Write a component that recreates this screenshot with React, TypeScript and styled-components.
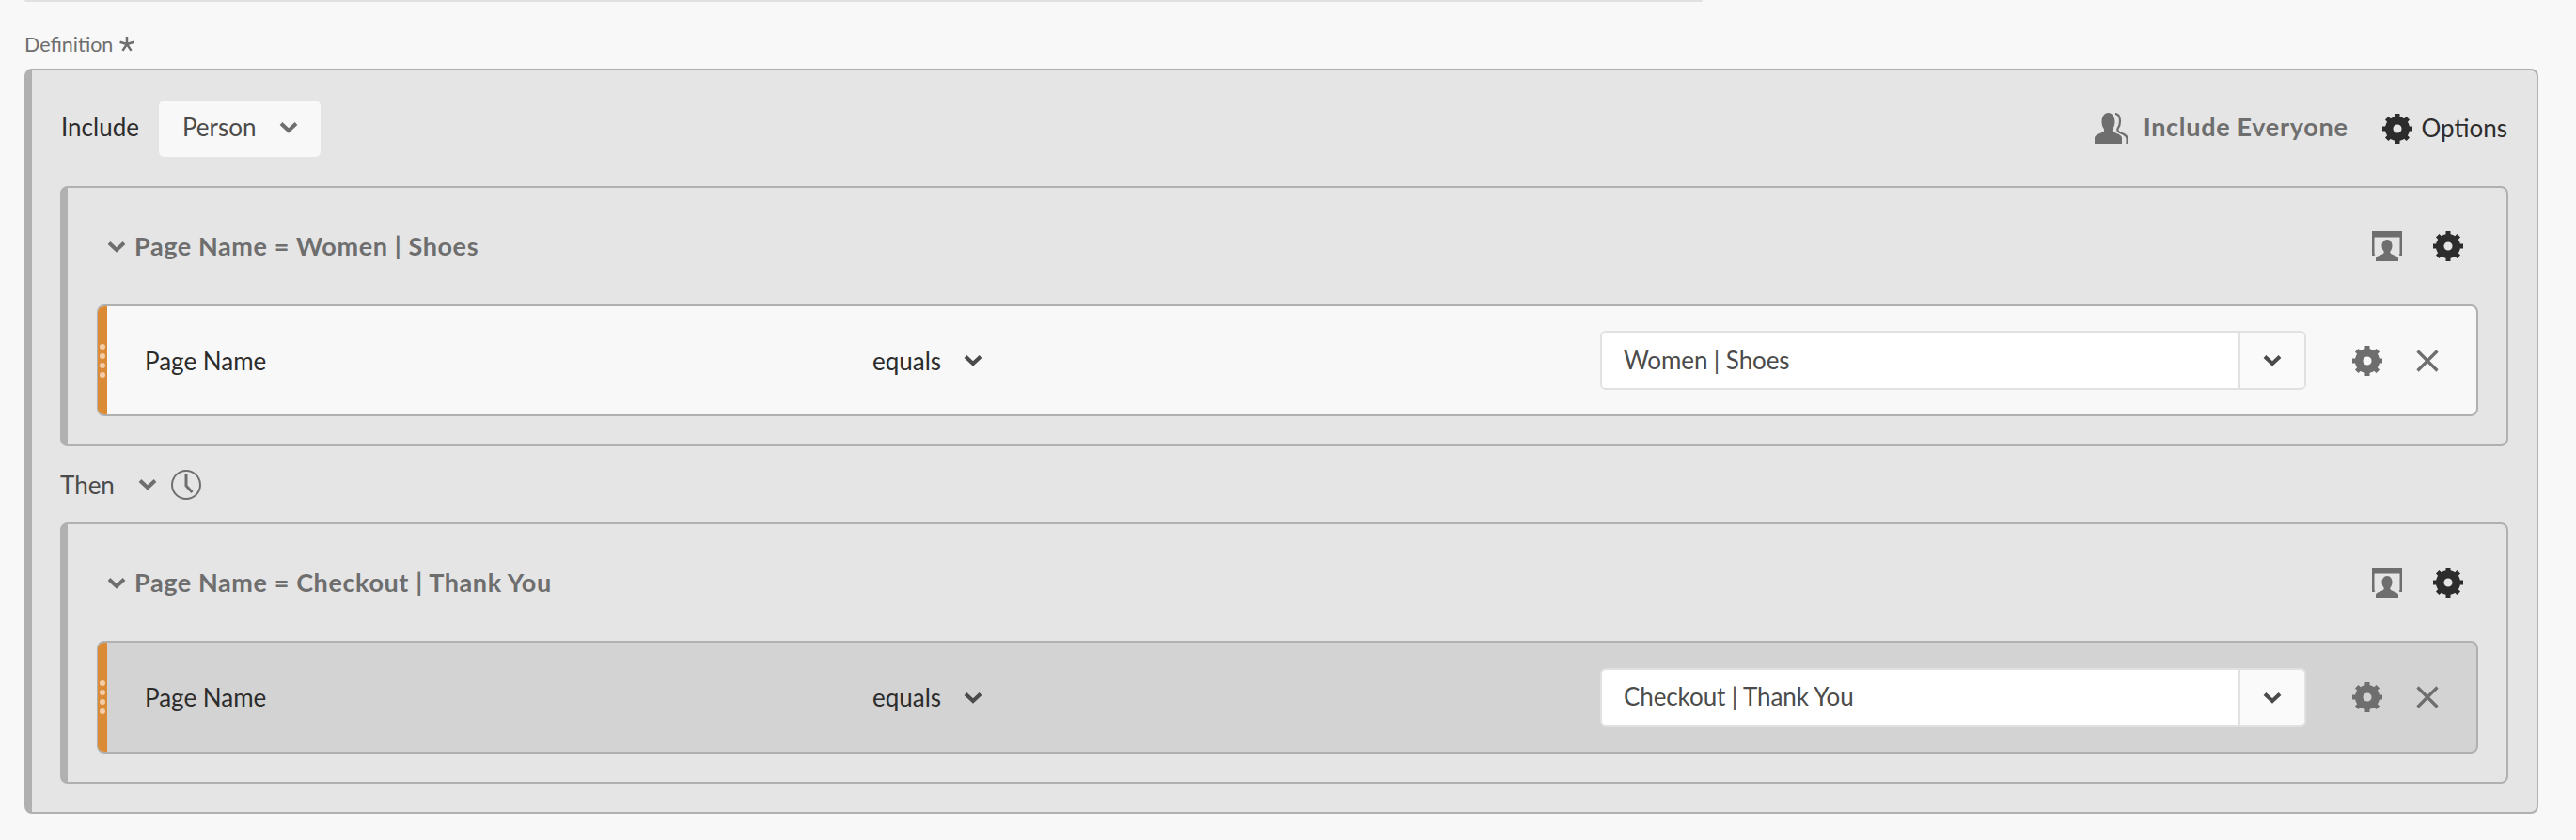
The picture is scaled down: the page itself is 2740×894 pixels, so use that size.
import React from 'react';
import styled, { createGlobalStyle } from 'styled-components';

const GlobalStyle = createGlobalStyle`
  html, body {
    margin: 0;
    padding: 0;
    background: #f8f8f8;
    font-family: Lato, 'Open Sans', sans-serif;
    overflow: hidden;
  }
`;

const Chevron = ({ color = '#6e6e6e' }: { color?: string }) => (
  <svg width="20" height="13" viewBox="0 0 20 13">
    <polyline points="2,2.500 10,10 18,2.500" fill="none" stroke={color} strokeWidth="4" />
  </svg>
);

const Gear = ({ color = '#2c2c2c' }: { color?: string }) => (
  <svg width="32" height="32" viewBox="0 0 32 32">
    {[0, 45, 90, 135, 180, 225, 270, 315].map((deg) => (
      <rect key={deg} x="13.500" y="0" width="5" height="7" fill={color} transform={`rotate(${deg} 16 16)`} />
    ))}
    <circle cx="16" cy="16" r="8.800" fill="none" stroke={color} strokeWidth="8.500" />
  </svg>
);

const Close = () => (
  <svg width="24" height="24" viewBox="0 0 24 24">
    <path d="M1.500 1.500 22.500 22.500M22.500 1.500 1.500 22.500" fill="none" stroke="#6e6e6e" strokeWidth="3.200" />
  </svg>
);

const People = () => (
  <svg width="36" height="33" viewBox="0 0 36 33">
    <path
      d="M0 33v-6c0-3 4-4.500 8-6 2-.8 2.500-2 2-3.500-1.500-2-2.500-5-2.500-8C7.500 4 10.500 0 14.500 0s7 4 7 9.500c0 3-1 6-2.500 8-.5 1.500 0 2.700 2 3.500 4 1.500 8 3 8 6v6z"
      fill="#6e6e6e"
    />
    <path
      d="M22 1c3.500.5 5 4 5 8 0 3-1 6-2.500 8-.5 1.500 0 3 2 4 4 1.500 8 3 8 6.500V33"
      fill="none"
      stroke="#6e6e6e"
      strokeWidth="2.200"
    />
  </svg>
);

const SegmentIcon = () => (
  <svg width="32" height="32" viewBox="0 0 32 32">
    <path d="M0 0h32v26h-2.500l-1-1.500h1V6.500h-27v18h1l-1 1.500H0z" fill="#6e6e6e" />
    <path
      d="M4 32v-3c0-2 4-3 7-4.500 1.500-.8 2-1.500 1.500-3-1-1.500-2-3.500-2-6C10.500 12 12.800 9 16 9s5.500 3 5.500 6.500c0 2.500-1 4.500-2 6-.5 1.500 0 2.200 1.500 3 3 1.500 7 2.500 7 4.500v3z"
      fill="#6e6e6e"
    />
  </svg>
);

const Clock = () => (
  <svg width="32" height="32" viewBox="0 0 32 32">
    <circle cx="16" cy="16" r="15" fill="none" stroke="#6e6e6e" strokeWidth="2" />
    <polyline points="16,5 16,17 22.500,24" fill="none" stroke="#6e6e6e" strokeWidth="3" />
  </svg>
);

const Asterisk = () => (
  <svg width="16" height="16" viewBox="0 0 14 14">
    <path d="M7 0v7M7 7 .5 5M7 7l6.500-2M7 7l-4 6M7 7l4 6" fill="none" stroke="#6e6e6e" strokeWidth="2.200" />
  </svg>
);

const Page = styled.div`
  width: 2740px;
  height: 894px;
  box-sizing: border-box;
  padding-right: 40px;
  padding-left: 26px;
`;

const ClippedField = styled.div`
  width: 1785px;
  height: 2px;
  box-sizing: border-box;
  border-bottom: 2px solid #e1e1e1;
  border-radius: 0 0 6px 6px;
`;

const FieldLabel = styled.div`
  display: flex;
  align-items: center;
  gap: 7px;
  box-sizing: border-box;
  height: 71px;
  padding-top: 18px;
  font-size: 21.500px;
  color: #6e6e6e;
`;

const OuterGroup = styled.div`
  box-sizing: border-box;
  height: 793px;
  background: #e5e5e5;
  border: 2px solid #b0b0b0;
  border-left-width: 8px;
  border-radius: 8px;
  padding: 0 30px;
`;

const TopBar = styled.div`
  display: flex;
  align-items: center;
  height: 123px;
  padding-left: 1px;
  padding-right: 1px;
`;

const PlainLabel = styled.span`
  padding-bottom: 3px;
  font-size: 26px;
  color: #2c2c2c;
`;

const ScopeSelect = styled.div`
  display: flex;
  align-items: center;
  justify-content: space-between;
  box-sizing: border-box;
  width: 172px;
  height: 60px;
  margin-left: 21px;
  padding: 0 24px 3px 25px;
  background: #f8f8f8;
  border-radius: 6px;
  font-size: 26px;
  color: #4b4b4b;
`;

const Actions = styled.div`
  display: flex;
  align-items: center;
  margin-left: auto;
`;

const EveryoneButton = styled.div`
  display: flex;
  align-items: center;
  gap: 16px;
  margin-right: 36px;
  font-size: 27px;
  font-weight: 700;
  letter-spacing: 0.7px;
  color: #6e6e6e;
`;

const EveryoneLabel = styled.span`
  padding-bottom: 4px;
`;

const OptionsButton = styled.div`
  display: flex;
  align-items: center;
  gap: 10px;
  font-size: 26px;
  color: #2c2c2c;
`;

const OptionsLabel = styled.span`
  padding-bottom: 2px;
`;

const Container = styled.div`
  box-sizing: border-box;
  background: #e5e5e5;
  border: 2px solid #b0b0b0;
  border-left-width: 8px;
  border-radius: 8px;
  padding: 0 30px 30px 31px;
`;

const ContainerHead = styled.div`
  display: flex;
  align-items: center;
  height: 124px;
  padding: 0 16px 0 11px;
`;

const ContainerTitle = styled.span`
  margin-left: 9px;
  padding-bottom: 2px;
  font-size: 27px;
  font-weight: 700;
  letter-spacing: 0.6px;
  color: #6e6e6e;
`;

const HeadIcons = styled.div`
  display: flex;
  align-items: center;
  gap: 33px;
  margin-left: auto;
`;

const Rule = styled.div<{ $dim?: boolean }>`
  display: flex;
  align-items: center;
  box-sizing: border-box;
  height: ${(p) => (p.$dim ? '120px' : '119px')};
  overflow: hidden;
  background: ${(p) => (p.$dim ? '#d3d3d3' : '#f8f8f8')};
  border: 2px solid #b0b0b0;
  border-left-width: 1px;
  border-radius: 8px;
`;

const Handle = styled.div`
  display: flex;
  flex-direction: column;
  align-items: center;
  justify-content: center;
  gap: 4px;
  flex: none;
  width: 10px;
  align-self: stretch;
  background: #db8b35;
`;

const HandleDot = styled.i`
  display: block;
  width: 6px;
  height: 6px;
  border-radius: 50%;
  background: #f3cda8;
`;

const AttributeName = styled.span`
  flex: none;
  width: 774px;
  margin-left: 40px;
  font-size: 26px;
  color: #2c2c2c;
`;

const Operator = styled.div`
  display: flex;
  align-items: center;
  gap: 24px;
  flex: none;
  width: 774px;
  font-size: 26px;
  color: #2c2c2c;
`;

const Combo = styled.div`
  display: flex;
  box-sizing: border-box;
  flex: none;
  width: 751px;
  height: 63px;
  overflow: hidden;
  border: 2px solid #e1e1e1;
  border-radius: 6px;
`;

const ComboInput = styled.div`
  display: flex;
  align-items: center;
  flex: 1;
  padding: 0 0 2px 23px;
  background: #fff;
  font-size: 26px;
  letter-spacing: -0.1px;
  color: #4b4b4b;
`;

const ComboButton = styled.div`
  display: flex;
  align-items: center;
  justify-content: center;
  flex: none;
  width: 68px;
  background: #fafafa;
  border-left: 2px solid #e1e1e1;
`;

const RuleActions = styled.div`
  display: flex;
  align-items: center;
  gap: 36px;
  margin-left: 49px;
`;

const ThenRow = styled.div`
  display: flex;
  align-items: center;
  height: 81px;
  font-size: 26px;
  color: #4b4b4b;
`;

const ThenChevron = styled.span`
  display: flex;
  margin: 0 15px 0 25px;
`;

type GroupProps = { title: string; value: string; dim?: boolean };

const SequenceGroup = ({ title, value, dim }: GroupProps) => (
  <Container>
    <ContainerHead>
      <Chevron />
      <ContainerTitle>{title}</ContainerTitle>
      <HeadIcons>
        <SegmentIcon />
        <Gear />
      </HeadIcons>
    </ContainerHead>
    <Rule $dim={dim}>
      <Handle>
        <HandleDot />
        <HandleDot />
        <HandleDot />
        <HandleDot />
      </Handle>
      <AttributeName>Page Name</AttributeName>
      <Operator>
        equals
        <Chevron color="#4b4b4b" />
      </Operator>
      <Combo>
        <ComboInput>{value}</ComboInput>
        <ComboButton>
          <Chevron color="#4b4b4b" />
        </ComboButton>
      </Combo>
      <RuleActions>
        <Gear color="#6e6e6e" />
        <Close />
      </RuleActions>
    </Rule>
  </Container>
);

export default function App() {
  return (
    <Page>
      <GlobalStyle />
      <ClippedField />
      <FieldLabel>
        Definition
        <Asterisk />
      </FieldLabel>
      <OuterGroup>
        <TopBar>
          <PlainLabel>Include</PlainLabel>
          <ScopeSelect>
            Person
            <Chevron />
          </ScopeSelect>
          <Actions>
            <EveryoneButton>
              <People />
              <EveryoneLabel>Include Everyone</EveryoneLabel>
            </EveryoneButton>
            <OptionsButton>
              <Gear />
              <OptionsLabel>Options</OptionsLabel>
            </OptionsButton>
          </Actions>
        </TopBar>
        <SequenceGroup title="Page Name = Women | Shoes" value="Women | Shoes" />
        <ThenRow>
          Then
          <ThenChevron>
            <Chevron />
          </ThenChevron>
          <Clock />
        </ThenRow>
        <SequenceGroup title="Page Name = Checkout | Thank You" value="Checkout | Thank You" dim />
      </OuterGroup>
    </Page>
  );
}
